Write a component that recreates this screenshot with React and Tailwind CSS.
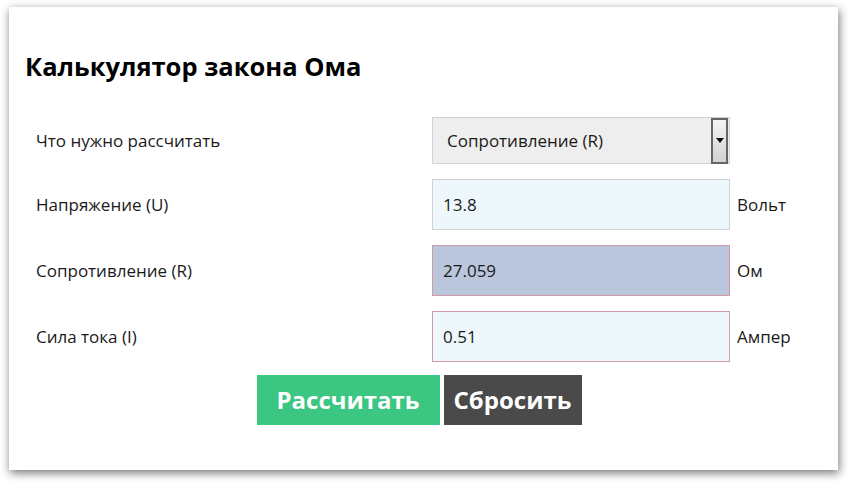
import React from 'react';

const FIELDS = [
  { key: 'u', label: 'Напряжение (U)', value: '13.8', unit: 'Вольт', tone: 'plain' },
  { key: 'r', label: 'Сопротивление (R)', value: '27.059', unit: 'Ом', tone: 'result' },
  { key: 'i', label: 'Сила тока (I)', value: '0.51', unit: 'Ампер', tone: 'warn' },
];

const TONES = {
  plain: 'border-[#cfd3d6] bg-[#eef8fc]',
  result: 'border-[#d39aa3] bg-[#b9c6dc]',
  warn: 'border-[#d39aa3] bg-[#eef8fc]',
};

function SelectArrow() {
  return (
    <div className="flex h-[46px] w-[17px] items-center justify-center border-2 border-[#666666] bg-gradient-to-b from-[#f4f4f4] to-[#d2d2d2]">
      <svg viewBox="0 0 8 5" className="h-[5px] w-[8px]" aria-hidden="true">
        <path d="M0 0h8L4 5Z" fill="#111" />
      </svg>
    </div>
  );
}

export default function App() {
  return (
    <div className="min-h-[487px] bg-white pl-[9px] pt-[7px] font-['Open_Sans',sans-serif] text-[#1a1a1a]">
      <div className="h-[463px] w-[829px] bg-white shadow-[1px_3px_9px_rgba(0,0,0,0.55)]">
        <h1 className="pl-4 pt-[41px] text-[25.5px] leading-[36px] font-bold text-black">Калькулятор закона Ома</h1>

        <div className="mt-[33px] flex flex-col gap-[15px] pl-[27px]">
          <div className="flex h-[47px] items-center">
            <span className="w-[396px] text-[17px]">Что нужно рассчитать</span>
            <div className="flex h-[47px] w-[298px] items-center justify-between border border-solid border-[#cfd3d6] bg-[#eeeeee] pl-[14px] pr-[1px] text-[17px]">
              <span>Сопротивление (R)</span>
              <SelectArrow />
            </div>
          </div>

          {FIELDS.map((f) => (
            <div key={f.key} className="flex h-[51px] items-center">
              <span className="w-[396px] text-[17px]">{f.label}</span>
              <div className={`box-border flex h-[51px] w-[298px] items-center border border-solid pl-[10px] text-[17px] ${TONES[f.tone]}`}>
                {f.value}
              </div>
              <span className="pl-[7px] text-[17px]">{f.unit}</span>
            </div>
          ))}
        </div>

        <div className="mt-[13px] flex justify-center gap-[4px] pr-[9px]">
          <button className="h-[50px] w-[183px] bg-[#3bc681] text-[24px] font-bold text-white">Рассчитать</button>
          <button className="h-[50px] w-[138px] bg-[#4a4a4a] text-[24px] font-bold text-white">Сбросить</button>
        </div>
      </div>
    </div>
  );
}
